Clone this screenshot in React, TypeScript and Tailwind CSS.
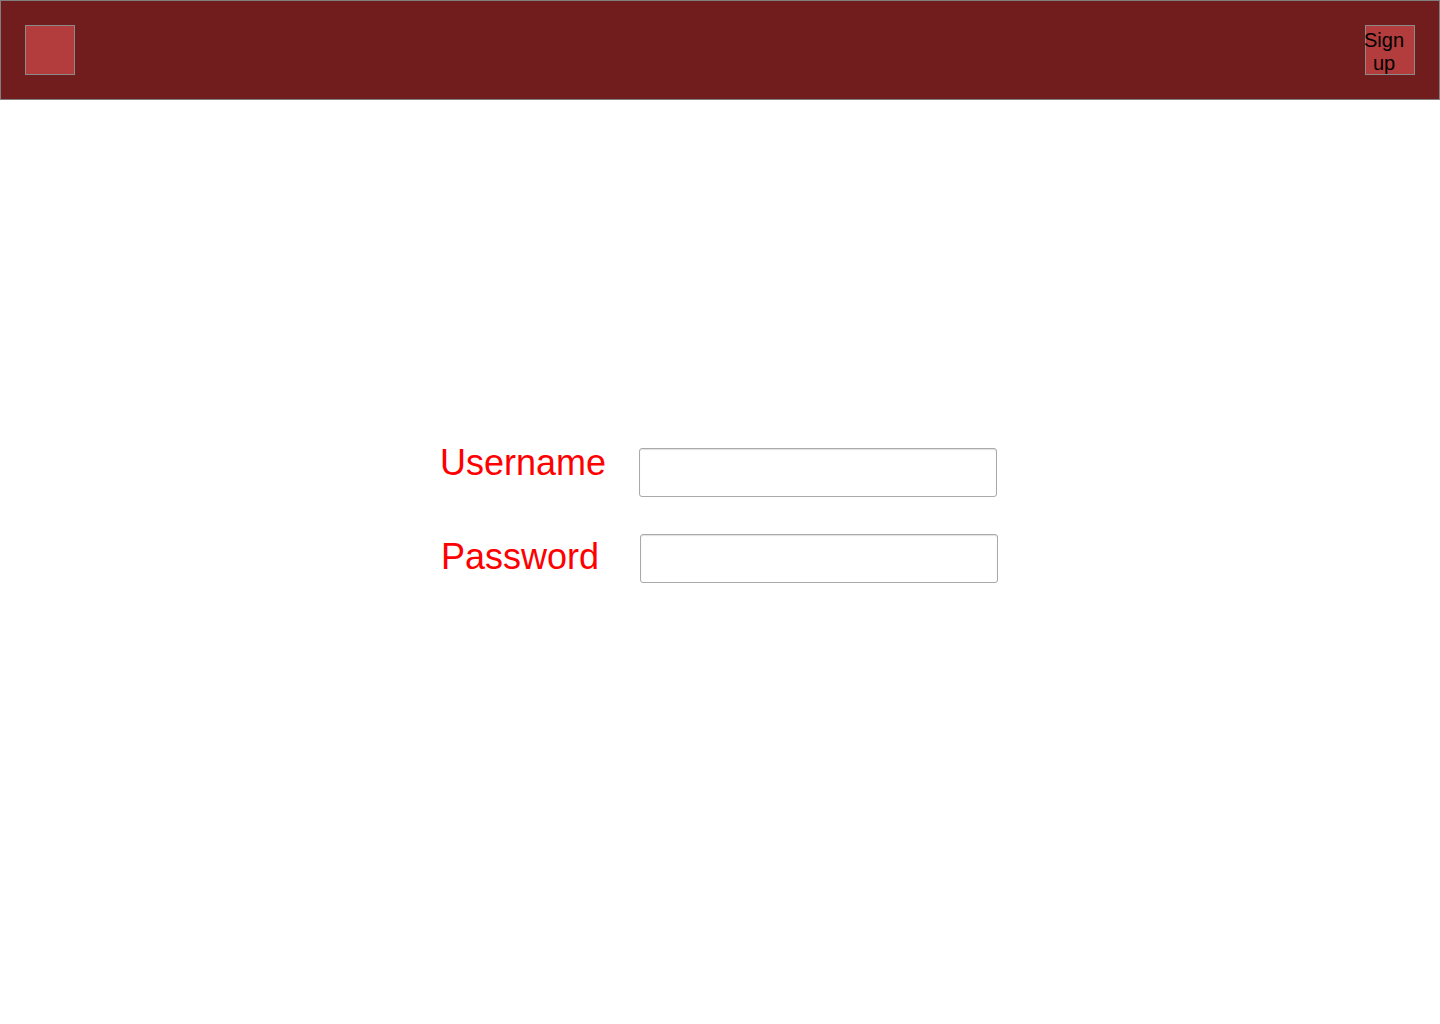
import * as React from "react";

const inputClass =
  "h-[49px] w-[358px] rounded-[3px] border border-[#a9a9a9] bg-white shadow-[inset_0_1px_1px_rgba(0,0,0,0.12)] outline-none";

function Header() {
  return (
    <header className="flex h-[100px] w-full items-center justify-between border border-[#808080] bg-[#711c1d] px-6">
      <button className="h-[50px] w-[50px] border border-[#8a8a8a] bg-[#b33c3d]" aria-label="Home" />
      <button className="flex h-[50px] w-[50px] items-start justify-start border border-[#8a8a8a] bg-[#b33c3d] p-0">
        <span className="-ml-[3px] mt-[3px] block w-[42px] text-center text-[20px] leading-[23px] text-black">
          Sign up
        </span>
      </button>
    </header>
  );
}

export default function App() {
  return (
    <div className="min-h-[1024px] w-full bg-white font-['Liberation_Sans',Arial,sans-serif]">
      <Header />
      <main className="flex justify-center pt-[348px]">
        <form className="-ml-[2px] flex flex-col">
          <div className="flex items-start">
            <label className="-mt-[3px] w-[199px] text-[36px] leading-none text-[#ff0000]">Username</label>
            <input type="text" className={inputClass} />
          </div>
          <div className="mt-[37px] flex items-start pl-px">
            <label className="mt-[5px] w-[199px] text-[36px] leading-none text-[#ff0000]">Password</label>
            <input type="password" className={inputClass} />
          </div>
        </form>
      </main>
    </div>
  );
}
